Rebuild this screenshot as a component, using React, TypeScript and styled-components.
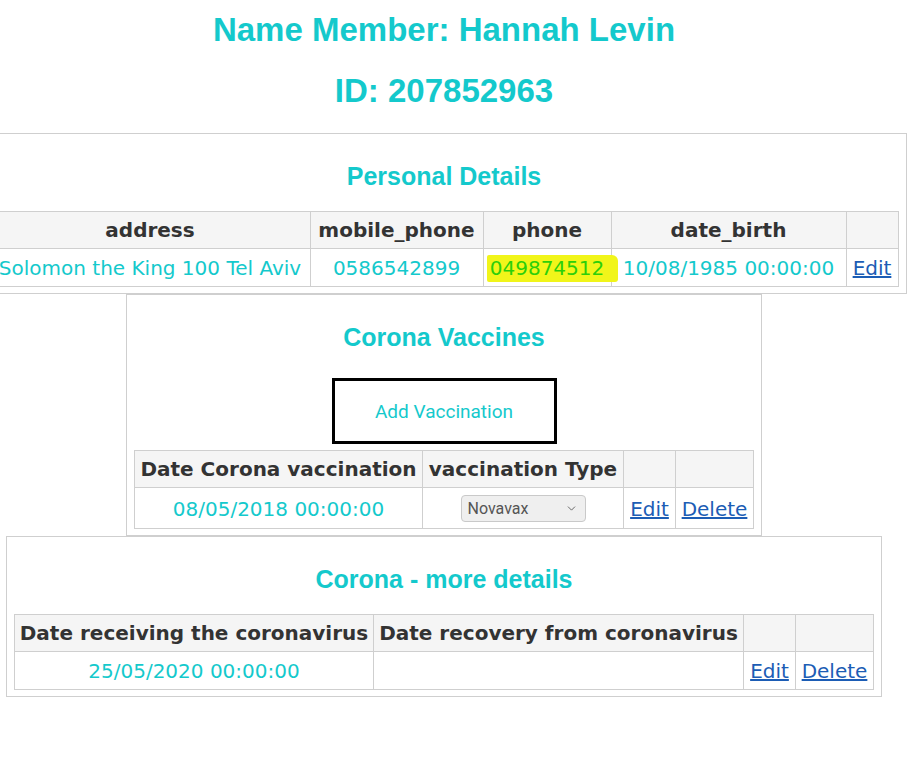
import styled, { createGlobalStyle } from 'styled-components';
import { ChevronDown } from 'lucide-react';

const GlobalStyle = createGlobalStyle`
  html, body {
    margin: 0;
    padding: 0;
    background: #ffffff;
    overflow: hidden;
  }
`;

const TEAL = '#14c9cc';
const LINK = '#1c5db5';
const BORDER = '#cfcfcf';

const Page = styled.div`
  width: 888px;
  padding-top: 11px;
  display: flex;
  flex-direction: column;
  align-items: center;
`;

const Title = styled.h1`
  margin: 0 0 23px;
  font-family: 'Liberation Sans', Arial, sans-serif;
  font-size: 33px;
  line-height: 38px;
  font-weight: 700;
  color: ${TEAL};
  white-space: nowrap;
`;

const Section = styled.section`
  flex-shrink: 0;
  width: max-content;
  border: 1px solid ${BORDER};
  padding: 0 7px 6px;
  background: #fff;
  display: flex;
  flex-direction: column;
  align-items: center;
`;

const SectionTitle = styled.h2`
  margin: 28px 0 21px;
  font-family: 'Liberation Sans', Arial, sans-serif;
  font-size: 25px;
  line-height: 28px;
  font-weight: 700;
  color: ${TEAL};
`;

const AddButton = styled.button`
  display: block;
  width: 225px;
  height: 66px;
  margin: 6px auto 6px;
  box-sizing: border-box;
  border: 3px solid #000;
  background: #fff;
  color: ${TEAL};
  font-family: Roboto, 'Open Sans', sans-serif;
  font-size: 19px;
  cursor: pointer;
`;

const Table = styled.table`
  border-collapse: collapse;
  table-layout: fixed;
  font-family: 'DejaVu Sans', Verdana, sans-serif;
  font-size: 20px;
  line-height: 24px;
`;

const Col = styled.col<{ $width: number }>`
  width: ${({ $width }) => $width}px;
`;

const Th = styled.th`
  border: 1px solid ${BORDER};
  background: #f5f5f5;
  color: #333;
  font-weight: 700;
  padding: 6px 4px 6px;
  text-align: center;
  white-space: nowrap;
  overflow: visible;
`;

const Td = styled.td`
  border: 1px solid ${BORDER};
  color: ${TEAL};
  padding: 7px 4px 6px;
  text-align: center;
  white-space: nowrap;
  vertical-align: middle;
`;

const Link = styled.a`
  color: ${LINK};
  text-decoration: underline;
  cursor: pointer;
`;

const Marked = styled.span`
  position: relative;
  z-index: 0;
  color: #2ccf0a;

  &::before {
    content: '';
    position: absolute;
    left: -3px;
    right: -14px;
    top: -1px;
    bottom: -2px;
    background: #f1f51a;
    z-index: -1;
    border-radius: 2px 6px 3px 2px;
  }
`;

const SelectWrap = styled.span`
  position: relative;
  display: inline-block;
  vertical-align: middle;
`;

const Select = styled.select`
  appearance: none;
  width: 125px;
  height: 27px;
  box-sizing: border-box;
  border: 1px solid #c9c9c9;
  border-radius: 4px;
  background: #efefef;
  color: #555;
  font-family: Roboto, sans-serif;
  font-size: 16px;
  padding: 0 20px 0 6px;
  display: block;
`;

const Chevron = styled.span`
  position: absolute;
  right: 8px;
  top: 7px;
  color: #555;
  display: flex;
  pointer-events: none;
`;

export default function App() {
  return (
    <>
      <GlobalStyle />
      <Page>
        <Title>Name Member: Hannah Levin</Title>
        <Title>ID: 207852963</Title>

        <Section>
          <SectionTitle>Personal Details</SectionTitle>
          <Table>
            <colgroup>
              <Col $width={320} />
              <Col $width={173} />
              <Col $width={128} />
              <Col $width={235} />
              <Col $width={52} />
            </colgroup>
            <thead>
              <tr>
                <Th>address</Th>
                <Th>mobile_phone</Th>
                <Th>phone</Th>
                <Th>date_birth</Th>
                <Th />
              </tr>
            </thead>
            <tbody>
              <tr>
                <Td>Solomon the King 100 Tel Aviv</Td>
                <Td>0586542899</Td>
                <Td>
                  <Marked>049874512</Marked>
                </Td>
                <Td>10/08/1985 00:00:00</Td>
                <Td>
                  <Link>Edit</Link>
                </Td>
              </tr>
            </tbody>
          </Table>
        </Section>

        <Section>
          <SectionTitle>Corona Vaccines</SectionTitle>
          <AddButton>Add Vaccination</AddButton>
          <Table>
            <colgroup>
              <Col $width={288} />
              <Col $width={201} />
              <Col $width={52} />
              <Col $width={78} />
            </colgroup>
            <thead>
              <tr>
                <Th>Date Corona vaccination</Th>
                <Th>vaccination Type</Th>
                <Th />
                <Th />
              </tr>
            </thead>
            <tbody>
              <tr>
                <Td>08/05/2018 00:00:00</Td>
                <Td>
                  <SelectWrap>
                    <Select defaultValue="Novavax">
                      <option>Novavax</option>
                      <option>Pfizer</option>
                      <option>Moderna</option>
                      <option>AstraZeneca</option>
                      <option>Johnson &amp; Johnson</option>
                    </Select>
                    <Chevron>
                      <ChevronDown size={13} strokeWidth={1.6} />
                    </Chevron>
                  </SelectWrap>
                </Td>
                <Td>
                  <Link>Edit</Link>
                </Td>
                <Td>
                  <Link>Delete</Link>
                </Td>
              </tr>
            </tbody>
          </Table>
        </Section>

        <Section>
          <SectionTitle>Corona - more details</SectionTitle>
          <Table>
            <colgroup>
              <Col $width={359} />
              <Col $width={370} />
              <Col $width={52} />
              <Col $width={78} />
            </colgroup>
            <thead>
              <tr>
                <Th>Date receiving the coronavirus</Th>
                <Th>Date recovery from coronavirus</Th>
                <Th />
                <Th />
              </tr>
            </thead>
            <tbody>
              <tr>
                <Td>25/05/2020 00:00:00</Td>
                <Td />
                <Td>
                  <Link>Edit</Link>
                </Td>
                <Td>
                  <Link>Delete</Link>
                </Td>
              </tr>
            </tbody>
          </Table>
        </Section>
      </Page>
    </>
  );
}
